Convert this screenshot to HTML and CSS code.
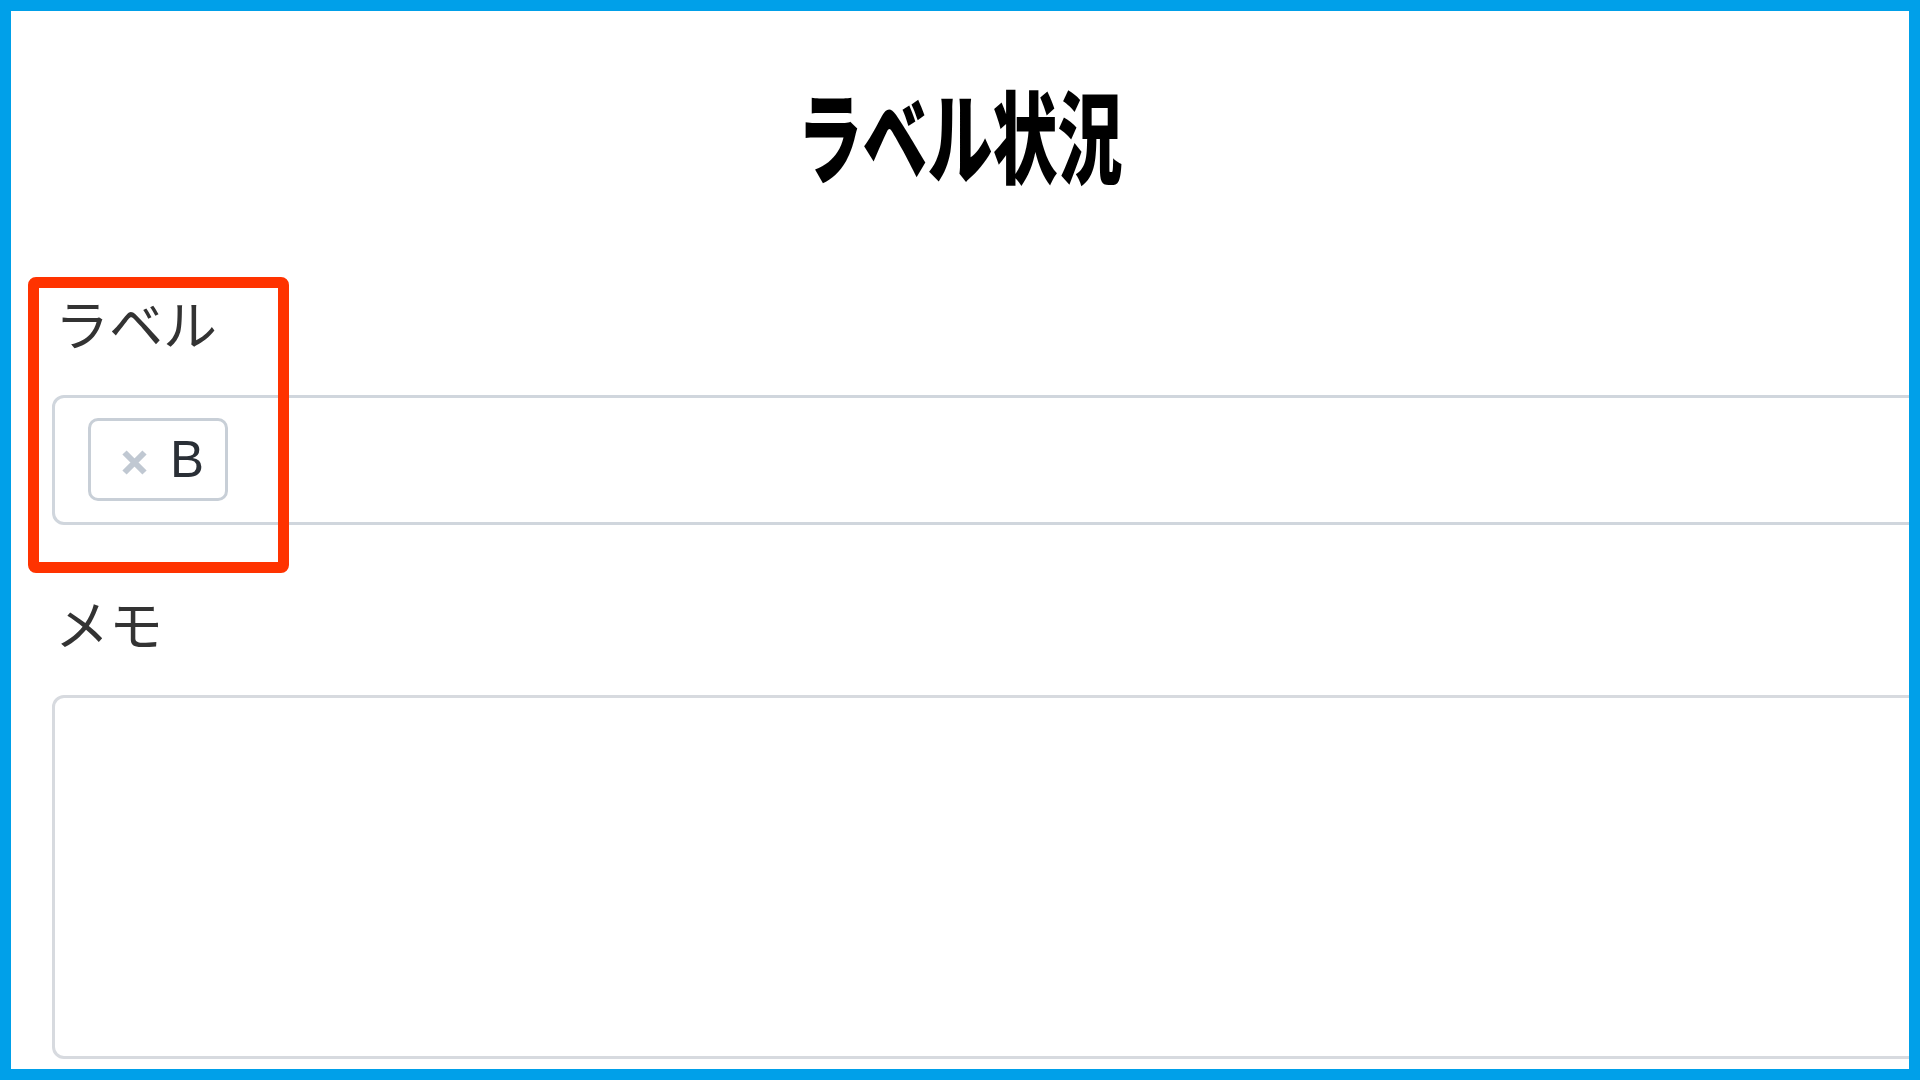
FILE: index.html
```html
<!DOCTYPE html>
<html lang="ja">
<head>
<meta charset="utf-8">
<title>ラベル状況</title>
<link rel="stylesheet" href="styles.css">
</head>
<body>
<div class="frame">
  <div class="content">
    <h1 class="title"><span class="title-text">ラベル状況</span></h1>
    <div class="field">
      <div class="label">ラベル</div>
      <div class="input">
        <span class="chip">
          <svg class="chip-x" width="27" height="25" viewBox="0 0 27 25"><path d="M3.5 2.5 L23.5 22.5 M23.5 2.5 L3.5 22.5" stroke="#c0c8d2" stroke-width="6" fill="none"/></svg>
          <span class="chip-text">B</span>
        </span>
      </div>
    </div>
    <div class="field field-memo">
      <div class="label">メモ</div>
      <div class="textarea"></div>
    </div>
  </div>
  <div class="highlight"></div>
</div>
</body>
</html>
```
FILE: styles.css
```css
html, body {
  margin: 0;
  padding: 0;
  background: #ffffff;
}
.frame {
  position: relative;
  box-sizing: border-box;
  width: 1920px;
  height: 1080px;
  border: 11px solid #00a0e9;
  overflow: hidden;
  background: #ffffff;
}
.content {
  padding-left: 41px;
  width: 1900px;
}
.title {
  margin: 72px 0 0 -41px;
  width: 1898px;
  height: 100px;
  font-family: "Noto Sans CJK JP", sans-serif;
  font-weight: 900;
  font-size: 100px;
  line-height: 100px;
  text-align: center;
  color: #000000;
}
.title-text {
  display: inline-block;
  transform: scaleX(0.65);
}
.field {
  margin-top: 110px;
}
.field-memo {
  margin-top: 68px;
}
.label {
  height: 60px;
  font-family: "Noto Sans CJK JP", sans-serif;
  font-weight: 400;
  font-size: 54px;
  line-height: 60px;
  color: #333333;
  padding-left: 3px;
}
.input {
  margin-top: 42px;
  box-sizing: border-box;
  height: 130px;
  border: 3px solid #d0d6dd;
  border-radius: 12px;
  padding: 20px 0 0 33px;
}
.chip {
  box-sizing: border-box;
  display: inline-flex;
  align-items: center;
  width: 140px;
  height: 83px;
  border: 3px solid #c8cfd7;
  border-radius: 10px;
  padding-left: 30px;
}
.chip-x {
  display: block;
  margin-top: 6px;
}
.chip-text {
  margin-left: 22px;
  font-family: "Liberation Sans", sans-serif;
  font-size: 51px;
  line-height: 1;
  color: #2a2f36;
}
.textarea {
  margin-top: 42px;
  box-sizing: border-box;
  height: 364px;
  border: 3px solid #d7dadf;
  border-radius: 12px;
}
.highlight {
  position: absolute;
  left: 17px;
  top: 266px;
  box-sizing: border-box;
  width: 261px;
  height: 296px;
  border: 11px solid #ff3300;
  border-radius: 8px;
}
```
